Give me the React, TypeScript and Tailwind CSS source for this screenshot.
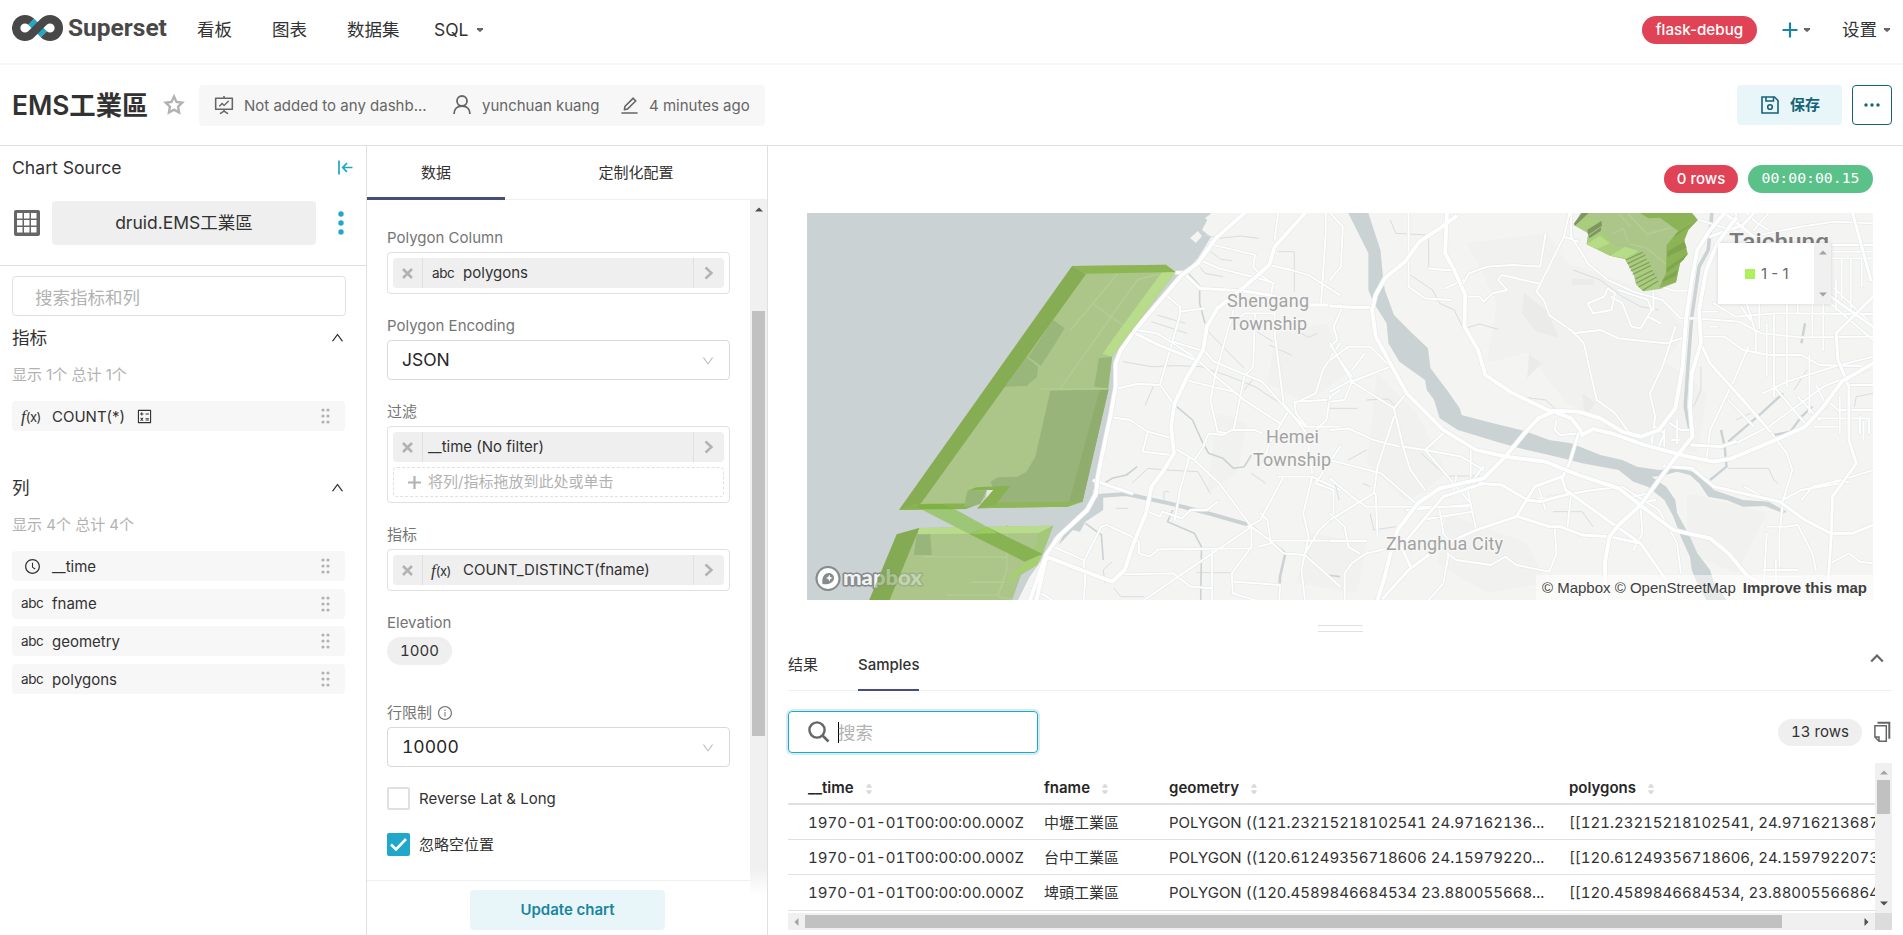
import type { ReactNode } from "react";
import {
  AiOutlineCalculator,
  AiOutlineClockCircle,
  AiOutlineDown,
  AiOutlineEdit,
  AiOutlineFundProjectionScreen,
  AiOutlineInfoCircle,
  AiOutlineUp,
} from "react-icons/ai";

/* ---------- small shared pieces ---------- */

function Caret() {
  return (
    <svg width="8" height="6" viewBox="0 0 8 6" className="shrink-0">
      <path d="M1 1h6v1.2L4.6 4.8H3.4L1 2.2z" fill="#666" />
    </svg>
  );
}

function Fx() {
  return (
    <span className="inline-flex items-baseline text-[#323232]">
      <span className="font-['Liberation_Serif',serif] text-[17px] leading-none italic">f</span>
      <span className="text-[13px] leading-none tracking-[-0.5px]">(x)</span>
    </span>
  );
}

function Grip() {
  return (
    <svg width="10" height="16" viewBox="0 0 10 16" fill="#b2b2b2">
      {[2, 8, 14].map((y) => (
        <g key={y}>
          <circle cx="2" cy={y} r="1.6" />
          <circle cx="7" cy={y} r="1.6" />
        </g>
      ))}
    </svg>
  );
}

function Chevron() {
  return (
    <svg width="10" height="14" viewBox="0 0 10 14" fill="none">
      <path d="M1.5 1.5L7.5 7l-6 5.5" stroke="#b2b2b2" strokeWidth="2.4" />
    </svg>
  );
}

function Arrow({ dir, color }: { dir: "up" | "down" | "left" | "right"; color: string }) {
  const d = {
    up: "M0 4.5L4 0.5L8 4.5z",
    down: "M0 0.5L4 4.5L8 0.5z",
    left: "M4.5 0L0.5 4L4.5 8z",
    right: "M0.5 0L4.5 4L0.5 8z",
  }[dir];
  const vertical = dir === "up" || dir === "down";
  return (
    <svg width={vertical ? 8 : 5} height={vertical ? 5 : 8} className="shrink-0">
      <path d={d} fill={color} />
    </svg>
  );
}

/* ---------- top navigation ---------- */

function Logo() {
  return (
    <div className="flex h-[64px] w-[185px] items-center pl-[12px]">
      <svg width="52" height="28" viewBox="0 0 52 28" fill="none" className="mt-[-8px]">
        <path d="M19.2 7.8L31.8 20.2" stroke="#20a7c9" strokeWidth="8.6" />
        <path
          d="M19.2 7.8A8.8 8.8 0 1 0 19.2 20.2L31.8 7.8A8.8 8.8 0 1 1 31.8 20.2"
          stroke="#484848"
          strokeWidth="8.4"
        />
      </svg>
      <span className="mt-[-7px] ml-[4px] font-['Roboto',sans-serif] text-[24.5px] font-bold tracking-[0px] text-[#484848]">
        Superset
      </span>
    </div>
  );
}

function NavBar() {
  return (
    <nav className="flex h-[65px] shrink-0 border-b-2 border-[#f7f7f7] text-[17.5px] text-[#323232]">
      <Logo />
      <div className="flex h-[60px] flex-1 items-center">
        <span className="w-[75px] pl-[12px]">看板</span>
        <span className="w-[75px] pl-[12px]">图表</span>
        <span className="w-[87px] pl-[12px]">数据集</span>
        <span className="flex items-center gap-[7px] pl-[12px]">
          SQL <Caret />
        </span>
        <span className="mr-[25px] ml-auto flex h-[28px] w-[115px] items-center justify-center rounded-full bg-[#e04355] text-[15.2px] font-medium text-white">
          flask-debug
        </span>
        <svg width="16" height="16" viewBox="0 0 16 16" className="mr-[5px]">
          <path d="M8 0.5v15M0.5 8h15" stroke="#1a85a0" strokeWidth="2.2" />
        </svg>
        <Caret />
        <span className="mr-[6px] ml-[31px]">设置</span>
        <Caret />
        <span className="w-[12px]" />
      </div>
    </nav>
  );
}

/* ---------- chart header ---------- */

function Header() {
  return (
    <header className="flex h-[81px] shrink-0 items-center border-b border-[#e0e0e0] pl-[12px]">
      <h1 className="w-[151px] pt-[1px] text-[26.4px] font-semibold tracking-[-0.05px] whitespace-nowrap text-[#323232]">
        EMS工業區
      </h1>
      <svg width="22" height="22" viewBox="0 0 22 22" fill="none">
        <path
          d="M11 2.6l2.5 5.3 5.8.8-4.2 4 1 5.8-5.1-2.8-5.1 2.8 1-5.8-4.2-4 5.8-.8z"
          stroke="#b2b2b2"
          strokeWidth="2.4"
        />
      </svg>
      <div className="ml-[14px] flex h-[41px] w-[566px] items-center rounded-[4px] bg-[#f7f7f7] pl-[14px] text-[15px] whitespace-nowrap text-[#666]">
        <AiOutlineFundProjectionScreen size={22} className="shrink-0" />
        <span className="ml-[9px] w-[209px] pt-[2px]">Not added to any dashb...</span>
        <svg width="18" height="20" viewBox="0 0 18 20" fill="none" className="shrink-0">
          <circle cx="9" cy="6" r="5" stroke="#666" strokeWidth="1.8" />
          <path d="M1 19c0-5 3.4-8 8-8s8 3 8 8" stroke="#666" strokeWidth="1.8" />
        </svg>
        <span className="ml-[11px] w-[137px] pt-[2px]">yunchuan kuang</span>
        <AiOutlineEdit size={21} className="shrink-0" />
        <span className="ml-[9px] pt-[2px]">4 minutes ago</span>
      </div>
      <button className="ml-auto flex h-[40px] w-[105px] items-center rounded-[4px] bg-[#e9f6f9] pl-[24px] text-[15px] font-bold text-[#156378]">
        <svg width="18" height="18" viewBox="0 0 18 18" fill="none" stroke="#156378" strokeWidth="1.6">
          <path d="M1 1h12.500L17 4.500V17H1z" />
          <path d="M5 1v4h7.500V1" />
          <circle cx="9" cy="11" r="2.3" />
        </svg>
        <span className="ml-[11px]">保存</span>
      </button>
      <button className="mr-[11px] ml-[10px] flex h-[40px] w-[40px] items-center justify-center rounded-[4px] border border-[#156378]">
        <svg width="16" height="4" viewBox="0 0 16 4" fill="#156378">
          <circle cx="2" cy="2" r="1.7" />
          <circle cx="8" cy="2" r="1.7" />
          <circle cx="14" cy="2" r="1.7" />
        </svg>
      </button>
    </header>
  );
}

/* ---------- data source panel ---------- */

function SourceRow({ icon, name, extra }: { icon: ReactNode; name: string; extra?: ReactNode }) {
  return (
    <div className="flex h-[30px] w-[333px] shrink-0 items-center rounded-[4px] bg-[#f7f7f7] text-[15px] text-[#323232]">
      <span className="flex w-[40px] items-center pl-[9px]">{icon}</span>
      <span className="pt-[2px]">{name}</span>
      {extra}
      <span className="mr-[14px] ml-auto">
        <Grip />
      </span>
    </div>
  );
}

function SectionTitle({ children }: { children: ReactNode }) {
  return (
    <div className="flex h-[36px] items-center justify-between pr-[21px] text-[17.6px] text-[#323232]">
      {children}
      <AiOutlineUp size={15} className="mt-[-1px]" />
    </div>
  );
}

const Abc = () => <span className="text-[13.5px] tracking-[-0.4px]">abc</span>;

function SourcePanel() {
  return (
    <aside className="flex w-[367px] shrink-0 flex-col border-r border-[#e0e0e0]">
      <div className="flex h-[120px] shrink-0 flex-col border-b border-[#e0e0e0]">
        <div className="flex h-[44px] items-center justify-between pr-[13px] pl-[12px] text-[17.6px] text-[#323232]">
          Chart Source
          <svg width="15" height="15" viewBox="0 0 15 15" fill="none" stroke="#20a7c9" strokeWidth="1.7" className="mt-[-2px]">
            <path d="M1 0.500v14M14.500 7.500H5M9 3.200L4.700 7.500L9 11.800" />
          </svg>
        </div>
        <div className="mt-[11px] flex h-[44px] items-center">
          <svg width="26" height="26" viewBox="0 0 26 26" className="ml-[14px]">
            <rect width="26" height="26" rx="2" fill="#666" />
            {[3, 10, 17].map((y) => [3, 10, 17].map((x) => <rect key={`${x}-${y}`} x={x} y={y} width="5.500" height="5.500" fill="#fff" />))}
          </svg>
          <span className="ml-[12px] flex h-[44px] w-[264px] items-center justify-center rounded-[4px] bg-[#efefef] text-[17.5px] text-[#323232]">
            druid.EMS工業區
          </span>
          <svg width="6" height="24" viewBox="0 0 6 24" fill="#20a7c9" className="ml-[22px]">
            <circle cx="3" cy="3" r="2.7" />
            <circle cx="3" cy="12" r="2.7" />
            <circle cx="3" cy="21" r="2.7" />
          </svg>
        </div>
      </div>
      <div className="flex flex-col pl-[12px]">
        <div className="mt-[10px] flex h-[40px] w-[334px] items-center rounded-[4px] border border-[#e0e0e0] pt-[4px] pl-[22px] text-[17.5px] text-[#b2b2b2]">
          搜索指标和列
        </div>
        <div className="mt-[4px]">
          <SectionTitle>指标</SectionTitle>
        </div>
        <div className="flex h-[45px] items-center pb-[7px] text-[15px] text-[#b2b2b2]">显示 1个 总计 1个</div>
        <SourceRow icon={<Fx />} name="COUNT(*)" extra={<AiOutlineCalculator size={17} className="ml-[11px]" />} />
        <div className="mt-[39px]">
          <SectionTitle>列</SectionTitle>
        </div>
        <div className="flex h-[45px] items-center pb-[7px] text-[15px] text-[#b2b2b2]">显示 4个 总计 4个</div>
        <div className="flex flex-col gap-[7.600px]">
          <SourceRow icon={<AiOutlineClockCircle size={17} className="ml-[3px]" />} name="__time" />
          <SourceRow icon={<Abc />} name="fname" />
          <SourceRow icon={<Abc />} name="geometry" />
          <SourceRow icon={<Abc />} name="polygons" />
        </div>
      </div>
    </aside>
  );
}

/* ---------- control panel ---------- */

function Label({ children }: { children: ReactNode }) {
  return <div className="flex h-[28px] shrink-0 items-center gap-[5px] text-[15px] text-[#757575]">{children}</div>;
}

function Pill({ children }: { children: ReactNode }) {
  return (
    <div className="flex h-[30px] items-stretch overflow-hidden rounded-[4px] bg-[#efefef] text-[15px] text-[#323232]">
      <span className="flex w-[30px] items-center justify-center border-r border-[#e0e0e0]">
        <svg width="11" height="11" viewBox="0 0 11 11">
          <path d="M1 1l9 9M10 1l-9 9" stroke="#b2b2b2" strokeWidth="2.500" />
        </svg>
      </span>
      <span className="flex flex-1 items-center">{children}</span>
      <span className="flex w-[31px] items-center justify-center border-l border-[#e0e0e0]">
        <Chevron />
      </span>
    </div>
  );
}

function Box({ children }: { children: ReactNode }) {
  return <div className="flex shrink-0 flex-col gap-[5px] rounded-[4px] border border-[#e0e0e0] p-[5px]">{children}</div>;
}

function Select({ value }: { value: string }) {
  return (
    <div className="flex h-[40px] shrink-0 items-center justify-between rounded-[4px] border border-[#d9d9d9] pr-[14px] pl-[14px] text-[17.5px] text-[#262626] tabular-nums">
      {value}
      <AiOutlineDown size={14} className="mt-[2px] text-[#bfbfbf]" />
    </div>
  );
}

function Check({ on, children }: { on?: boolean; children: ReactNode }) {
  return (
    <div className="flex h-[23px] shrink-0 items-center gap-[9px] text-[15px] text-[#323232]">
      {on ? (
        <svg width="23" height="23" viewBox="0 0 23 23" fill="none">
          <rect width="23" height="23" rx="2" fill="#20a7c9" />
          <path d="M4 11.500l5 5L19 6" stroke="#fff" strokeWidth="2.600" />
        </svg>
      ) : (
        <span className="h-[23px] w-[23px] rounded-[2px] border-2 border-[#e0e0e0]" />
      )}
      <span className="pt-[1px]">{children}</span>
    </div>
  );
}

function ControlPanel() {
  return (
    <section className="flex w-[401px] shrink-0 flex-col border-r border-[#e0e0e0]">
      <div className="flex h-[54px] shrink-0 border-b border-[#efefef] text-[15px] text-[#323232]">
        <span className="-mb-px flex w-[138px] items-center justify-center border-b-[3px] border-[#454e7c] pt-[3px]">数据</span>
        <span className="flex w-[262px] items-center justify-center pt-[1px]">定制化配置</span>
      </div>
      <div className="flex min-h-0 flex-1">
        <div className="flex w-[383px] flex-col">
          <div className="flex h-[680px] shrink-0 flex-col overflow-hidden pr-[20px] pl-[20px]">
            <div className="h-[24px] shrink-0" />
            <Label>Polygon Column</Label>
            <Box>
              <Pill>
                <span className="flex w-[40px] pl-[9px]">
                  <Abc />
                </span>
                polygons
              </Pill>
            </Box>
            <div className="h-[18px] shrink-0" />
            <Label>Polygon Encoding</Label>
            <Select value="JSON" />
            <div className="h-[18px] shrink-0" />
            <Label>过滤</Label>
            <Box>
              <Pill>
                <span className="pl-[5px]">__time (No filter)</span>
              </Pill>
              <div className="flex h-[30px] items-center rounded-[4px] border border-dashed border-[#e0e0e0] pl-[14px] text-[15px] text-[#b2b2b2]">
                <svg width="13" height="13" viewBox="0 0 13 13" className="mr-[7px]">
                  <path d="M6.500 0v13M0 6.500h13" stroke="#b2b2b2" strokeWidth="2.200" />
                </svg>
                将列/指标拖放到此处或单击
              </div>
            </Box>
            <div className="h-[18px] shrink-0" />
            <Label>指标</Label>
            <Box>
              <Pill>
                <span className="flex w-[40px] pl-[8px]">
                  <Fx />
                </span>
                COUNT_DISTINCT(fname)
              </Pill>
            </Box>
            <div className="h-[18px] shrink-0" />
            <Label>Elevation</Label>
            <div className="flex h-[28px] w-[65px] shrink-0 items-center justify-center rounded-full bg-[#efefef] pt-[1px] text-[15px] text-[#323232] tabular-nums">
              1000
            </div>
            <div className="h-[34px] shrink-0" />
            <Label>
              行限制 <AiOutlineInfoCircle size={16} />
            </Label>
            <Select value="10000" />
            <div className="h-[20px] shrink-0" />
            <Check>Reverse Lat &amp; Long</Check>
            <div className="h-[23px] shrink-0" />
            <Check on>忽略空位置</Check>
          </div>
          <div className="flex flex-1 border-t border-[#f0f0f0] pt-[9px] pl-[103px]">
            <button className="h-[40px] w-[195px] rounded-[4px] bg-[#e9f6f9] text-[15px] font-semibold text-[#1a85a0]">
              Update chart
            </button>
          </div>
        </div>
        <div className="flex w-[17px] flex-col items-center bg-linear-to-b from-[#f0f0f0] from-[668px] to-white to-[695px] pt-[7px]">
          <Arrow dir="up" color="#505050" />
          <div className="mt-[99px] h-[425px] w-[13px] bg-[#c1c1c1]" />
        </div>
      </div>
    </section>
  );
}

/* ---------- map ---------- */

function Roads({ d, w }: { d: string; w: number }) {
  return (
    <g fill="none" strokeLinejoin="round" strokeLinecap="round">
      <path d={d} stroke="#e8ebeb" strokeWidth={w + 1.5} vectorEffect="non-scaling-stroke" />
      <path d={d} stroke="#ffffff" strokeWidth={w} vectorEffect="non-scaling-stroke" />
    </g>
  );
}

function Streams({ d, w, color = "#cad2d3" }: { d: string; w: number; color?: string }) {
  return <path d={d} fill="none" stroke={color} strokeWidth={w} strokeLinejoin="round" vectorEffect="non-scaling-stroke" />;
}

const WEST_MINOR =
  "M1215 135L1330 165L1325 200L1345 225L1380 250L1375 285M1175 180L1230 205L1340 235L1385 250M1395 39L1385 120M1528 39V100L1515 310M1370 195L1430 210L1480 225L1568 285M1330 285L1385 330L1385 400L1410 610L1475 700L1490 820M1085 290L1120 320V345L1065 550M1120 335L1190 325M1000 390L1055 400L1100 430L1165 475L1210 520L1300 600L1400 670M1100 425L1190 455L1215 485L1350 545L1420 630L1470 680H1568M1270 330L1220 520L1205 600L1225 695L1250 700M1330 340L1325 500L1300 530L1270 690M1568 430L1520 510L1500 580L1440 610M1135 540L1270 575M945 565L1000 552L1065 555L1100 610M930 652L980 660L1030 695L1100 715M1030 695L1015 755L1095 765M1105 745L1160 780L1230 850L1320 980L1370 1020L1410 1060L1470 1065L1568 1160M1160 780L1185 740L1200 700L1240 705L1265 690H1330L1350 700M1145 775L1120 870L1105 960M1410 830L1345 960L1310 980M1395 830H1490L1568 870M1320 980L1170 1090L1020 1200M1490 830L1465 940L1480 1010L1460 1110L1470 1200M1370 1022H1568M1055 1048L1320 1045M1210 1048V1200M1030 935L1065 950L1070 935L1125 955L1150 930H1195L1225 905M985 1010L1005 1025V1060L1035 1070L1060 1048M765 1040L850 1080L855 1140L850 1200M850 1085L900 980L915 975L985 1010M960 1123L1100 1120L1150 1160L1210 1165M1320 1045V985M1320 1040L1265 1120L1268 1180L1330 1200M1270 1145L1400 1155L1398 1200M1568 570L1540 590L1530 660L1490 700M1420 640L1370 730L1350 800M1568 740L1500 850L1550 870V950L1510 990L1470 1060M700 1170L740 1185L760 1200M1345 940L1365 960L1375 1030L1340 1040M1530 600L1440 605L1445 640L1475 680M1270 370L1300 340H1385";
const WEST_MAJOR =
  "M1300 39L1220 115L1170 190L1125 225L990 395L955 450L940 490V560L925 650L905 750L890 830L885 880L860 930L780 1010L745 1065L700 1200M1470 39L1385 140L1370 195L1290 270L1225 325L1195 380L1185 450L1140 530L1105 610L1095 680L1103 760L1075 810L1040 860L1025 940L990 1030L965 1110L930 1145L750 1072M745 1075L718 1200";
const WEST_MID =
  "M1108 218H1130L1175 265L1290 272L1370 285L1480 315H1568M985 395L1060 435L1165 480M880 842L985 880";

const EAST_MAJOR =
  "M345 50L300 85L245 125L205 185L150 235L125 285L115 330L125 410L165 490L210 580L310 690L400 750L480 770L590 785L680 825L790 865L860 925L940 990L1040 1015L1090 1060L1140 1125L1190 1160M320 39L315 160L340 210L370 285L368 380L405 450L425 525L500 580L600 632L680 635L740 655L800 695L850 710L900 690L945 625L965 500L975 350L990 240L1005 150L1040 90L1080 39M1110 55L1060 130L1030 210L1010 330L1015 430L990 520L985 620L992 710L940 780L850 915L790 975L765 1010L752 1090L755 1200M130 1200L150 1130L165 1060L185 990L240 910L300 865L420 835L480 770L540 690L570 655L610 635M620 638L660 655L685 690L690 705L720 687L770 700L860 735L980 770L1050 785L1100 775L1230 715L1300 680L1350 620L1400 545L1486 490";
const EAST_MID =
  "M0 318L60 322H110M680 700L655 790L635 835L645 870L740 945L850 1030L920 1140M145 1195L215 1110L300 1040L400 990L510 950L560 860L635 830M410 850L470 855L540 900L575 905L660 880M515 950L600 980L630 980L690 1005L765 1010M915 798L990 805L1050 860L1130 880L1230 905L1300 960L1370 1000L1430 1000L1486 975M1015 430L1040 490L1130 600L1205 695M1360 1200L1372 1000L1375 890L1440 790L1420 720V560L1390 480L1385 400L1486 290M220 1100L195 1040L240 980L310 890L420 850M990 735L1070 740L1110 725M765 1010L850 1030M1080 39L1300 235L1486 380M1430 39L1480 240M1040 110L1130 75L1160 39";
const EAST_MINOR =
  "M215 39V260L260 295L330 300M0 39L35 80L30 200L0 240M35 318L10 380L20 420L0 440M590 100L575 200L500 195L430 200L380 220L365 250M365 240L315 265M270 205L315 210L340 210M370 290L410 290L420 305L445 280L485 270L460 240L470 225L570 250M655 39L640 110L565 275L585 300L600 345L665 395L695 430L715 530L730 600L780 640L820 700M665 400L740 390L790 415L920 430L975 410M660 39V110L695 170L705 190L760 240L830 275L910 300L960 355H1010M640 110L680 125M945 380L910 500L875 580L890 650L880 730M705 310L750 290L760 265L780 280L770 330L720 340ZM770 290L800 310L825 380L850 385L880 330L870 300L790 270M870 350L905 370M885 270V330M905 260L940 272H985M1205 695L1250 760L1265 810L1240 900L1230 1000V1100M1010 60L1130 100M1070 39L1140 100M1110 39L1125 90M1200 39L1160 90M1140 39L1170 70L1200 90M1150 110L1290 80L1380 65L1486 70M1375 135H1486M1375 155H1486M1375 175H1486M1000 355L1120 365L1180 400L1290 412L1486 410M1050 310L1110 350L1220 340L1486 342M1020 335H1060M1040 380H1060M1020 410H1080L1130 450L1200 465L1290 465L1340 495L1486 500M1125 320L1150 360M1140 310L1165 400V455M1175 310V385M1195 370V525M1215 340V590M1250 310V560M1280 310V340M1312 465V640M1320 310V410M1350 310V450M1455 180V260M1425 180V340M1385 240V330M1400 180V300M1380 265L1486 375M1370 310L1486 420M1395 630H1486M1340 655H1440M1325 680H1390M1395 590V700M1370 610L1395 635M1185 580L1250 545L1380 500L1486 470M1030 780L1040 690L1110 530L1145 440M1110 730L1200 680L1350 560L1486 500M1090 600L1160 680M1215 560L1300 670M1280 590L1340 660M1420 555H1486M1440 655H1475V700M1450 650V700M1460 665V720M1330 555L1360 620M950 660V730M935 720H955M930 670L960 690H985M915 690V740M890 680L915 700L900 740M0 480L50 440L110 440L165 500L60 545L40 600L0 605M0 430L60 545L175 625L200 740L260 750L385 910M60 540L0 575M20 470L60 530M95 460L60 510M175 625L205 585M175 650L130 800L120 880L0 960M0 780L140 820L245 920M260 750L320 690M260 750L360 770L420 810M0 835L60 890L100 920L380 920M210 930L380 915M250 960L390 935M375 860L400 990M300 930L310 1000L330 1030M320 1060L345 1080L440 1095L480 1070L510 1095L600 1115L620 1060L615 980M40 1200V1120L60 1090L100 1060L180 1040M0 1023H100M0 940L40 980L50 1040L80 1060M125 880L130 1010M560 900L720 870L800 860L900 930L950 1030L960 1120M660 880L650 980M570 860L590 930M620 660L615 690L630 705L680 700M850 925L855 1000L830 1050M790 865L830 890L870 880M840 910L890 900M1135 860L1210 905M1230 905L1290 870L1420 845M1290 900L1320 860L1400 840L1486 810M1195 980H1250L1280 975L1320 1060L1330 1110M1195 1000L1185 1200M1185 1110H1280M1200 1130H1290M1220 1080V1160M1370 1090L1420 1060L1450 1085L1486 1090M325 1060L310 1150L270 1200M345 830L340 870M260 870L220 810L200 740M385 750V830M0 690L50 685L120 720L190 740M420 800L385 850";

function Wordmark() {
  return (
    <>
      <circle cx="21" cy="365.5" r="11.5" fill="#fff" stroke="#868b8c" strokeWidth="2" />
      <path
        d="M15.500 371c-.7-5 .4-8.800 3.800-10.500 4-1.800 8.200 1 7.700 5.200-.6 4.200-6.300 6.200-11.500 5.300z"
        fill="#868b8c"
      />
      <path d="M22.300 361.500l1 2.500 2.500 1-2.500 1-1 2.500-1-2.500-2.500-1 2.500-1z" fill="#fff" />
      <text
        x="36"
        y="371.5"
        textLength="79"
        lengthAdjust="spacingAndGlyphs"
        fontFamily="Lato, sans-serif"
        fontWeight="900"
        fontSize="20"
        fill="#f2f4f4"
        stroke="#868b8c"
        strokeWidth="3"
        strokeLinejoin="round"
        paintOrder="stroke"
      >
        mapbox
      </text>
    </>
  );
}

function MapCanvas() {
  return (
    <svg width="1066" height="387" viewBox="0 0 1066 387" className="block">
      <rect width="1066" height="387" fill="#cad2d3" />
      <path
        d="M404 0L395 17L404 24L391 45L375 62L324 119L311 143L307 175L301 205L289 265L285 285L275 300L247 325L236 345L222 365L211 387H1066V0z"
        fill="#f4f4f3"
      />
      <path d="M383 25L391 18L395 23L389 30zM398 5L405 0L410 2L403 10z" fill="#f4f4f3" />
      <g fill="#f1f1f0">
        <path d="M660 30L740 20L760 50L850 80L880 120L840 170L800 210L760 190L720 140L680 150L690 90z" />
        <path d="M470 120L520 110L540 160L500 190L460 170zM570 160L610 200L640 260L600 290L560 250z" />
        <path d="M860 150L900 180L890 240L830 230L790 220zM410 200L440 210L430 260L400 280zM880 280L960 300L930 360L880 340z" />
        <path d="M640 300L720 330L740 370L680 380L630 350zM500 320L560 330L550 380L490 370z" />
      </g>
      <g fill="#ebebea">
        <path d="M717 80L740 98L752 125L728 118L715 100zM722 142L735 150L720 165zM775 180L788 190L778 205zM765 66h22v6h-22z" />
      </g>

      {/* western half: coast and townships */}
      <g transform="translate(-27 -13) scale(0.357143 0.333333)">
        <path d="M870 900L905 885V930L855 965L840 995L820 990L780 1035L800 990z" fill="#cad2d3" />
        <Streams
          w={1}
          color="#d8dddd"
          d="M1190 105L1230 115L1290 108L1340 115M1205 155L1235 178L1265 182M1175 200L1190 220L1240 230M1395 155H1440V275M1055 345L1135 370M1040 365L1140 400M960 485L1040 500L1110 497L1180 500L1260 530L1330 560L1400 610M1190 385L1240 440L1300 505M1335 395L1380 425M1370 435L1435 467M1330 530L1300 570M1045 560L1022 617M1450 395L1480 412L1505 400M985 850L1030 805L1080 810L1170 815L1205 880M1320 820L1360 850M1075 905V875H1090M910 1150L905 1110L930 1085M935 1165L955 1190H1020M1165 1118H1268M940 925H975"
        />
        <Streams
          w={1.6}
          d="M1145 222L1175 258V310L1190 370M1100 610L1155 660L1180 720L1200 760L1240 775L1270 805L1300 800L1320 765M900 855L930 835L970 825L1000 800M1100 930L1085 965L1160 1000L1180 1040L1178 1200M855 970L900 1005L905 1080M1475 1065L1530 1125L1568 1130"
        />
        <Streams w={4} d="M890 888L970 882L1090 910L1200 940L1320 977" />
        <Streams w={2.6} d="M1320 977L1380 1030L1415 1060L1400 1130L1398 1190" />
        <Roads w={1.8} d={WEST_MINOR} />
        <Roads w={2.8} d={WEST_MID} />
        <Roads w={3.8} d={WEST_MAJOR} />
      </g>

      {/* eastern half: river, Zhanghua and Taichung */}
      <g transform="translate(523 -13) scale(0.365430 0.333333)">
        <path
          d="M50 39H105L120 90L138 150L145 230L150 270L175 345L225 400L268 445L275 505L320 570L355 625L360 645L430 665L530 692L600 720L660 730L740 765L800 780L840 800L900 810L960 805L1000 818L1030 840L1050 870L1130 900L1200 905L1250 935L1240 940L1190 918L1130 920L1085 900L1035 890L1010 850L985 825L950 815L905 828L880 830L920 860L945 900L950 940L985 1010L1005 1060L1040 1110L1050 1145L1085 1200H1030L1005 1150L990 1110L985 1070L960 1010L940 950L915 900L870 860L830 845L790 810L690 790L620 770L520 745L470 730L350 690L300 655L285 600L265 570L260 540L190 485L160 430L155 370L120 310L105 270V160z"
          fill="#cad2d3"
        />
        <Streams
          w={1}
          color="#d8dddd"
          d="M165 60L180 100L270 105V200M220 225L280 270L300 310L340 330L365 385M370 385L410 372L460 388M490 565L520 590L590 600L620 630M665 210L740 240L800 290L850 320L900 330M100 600L160 597L185 625M250 760L290 800L320 828H410M0 625H75M50 780L100 750M90 850L110 860M15 855L25 900M610 935L690 935L720 980M1015 500V570L995 620M1090 805H1200L1215 840L1225 850M1305 510L1270 570M1486 580L1440 590L1435 620M1110 660L1150 640M110 940L120 990L180 980"
        />
        <Streams w={3.5} d="M1045 39L1035 150L1010 200L990 350L980 490L972 620L985 690" />
        <Streams w={2.4} d="M1070 690L1080 740L1085 800L1040 840M1090 725L1180 640L1240 580M1215 705L1260 695L1290 650L1320 620M1300 370L1290 430" />
        <Roads w={1.8} d={EAST_MINOR} />
        <Roads w={2.8} d={EAST_MID} />
        <Roads w={3.8} d={EAST_MAJOR} />
      </g>

      {/* place names */}
      <g
        fontFamily="Roboto, sans-serif"
        fontSize="18"
        fill="#a3a3a3"
        stroke="#f6f6f5"
        strokeWidth="3"
        strokeLinejoin="round"
        paintOrder="stroke"
      >
        <text x="420" y="94" textLength="82">Shengang</text>
        <text x="422" y="117" textLength="78">Township</text>
        <text x="459" y="230" textLength="53">Hemei</text>
        <text x="446" y="253" textLength="78">Township</text>
        <text x="579" y="337" textLength="117">Zhanghua City</text>
        <text x="922" y="37" textLength="100" lengthAdjust="spacingAndGlyphs" fontSize="24" fontWeight="500" fill="#7c7c7c">
          Taichung
        </text>
      </g>

      <Wordmark />

      {/* extruded industrial zones */}
      <g transform="translate(-27 -13) scale(0.357143 0.333333)">
        <path d="M818 198L1080 194L1108 216L930 470L920 565L847 905L805 920L553 925L598 870H578L575 890L560 912L520 927L333 930z" fill="#abc688" />
        <path d="M765 360L797 385L765 440L730 497L695 470zM690 472L722 500L720 530L690 558L630 560z" fill="#99b67b" />
        <path d="M757 572L920 568L847 905L805 920L553 925L598 870L590 845L610 832L665 830L690 815L715 770z" fill="#98b47a" />
        <path d="M895 570L920 568L847 905L808 912z" fill="#90ad6e" />
        <g fill="none" stroke="#b3cd94" strokeWidth="1.5">
          <path vectorEffect="non-scaling-stroke" d="M945 222L812 392M1060 222L1000 240L785 565M875 310L985 395M730 567H918" />
        </g>
        <path d="M818 198L857 222L395 910L333 930z" fill="#86ad54" />
        <path d="M818 198L1080 194L1108 216L857 221z" fill="#8cb653" />
        <path d="M1068 218L1108 216L930 470L903 462L930 420z" fill="#b9dc8c" />
        <path d="M893 475L930 470L918 565L880 560z" fill="#98b676" />
        <path d="M570 908L808 905L847 903L805 920L553 925z" fill="#8db75a" />
        <path d="M333 930L375 912L560 910L520 927z" fill="#88b34f" />
        <path d="M525 872L550 862L645 857L603 915L553 925L598 870z" fill="#88b251" />
        <path d="M525 872H578L560 912L515 922z" fill="#97b576" />
        <path d="M580 870H596L577 894z" fill="#e3e9e6" />
        <path d="M327 1003L390 984L765 977L735 1062L720 1095L675 1125L650 1200H250z" fill="#abc688" />
        <path d="M383 997H420L425 1065H375z" fill="#98b67b" />
        <g fill="none" stroke="#b3cd94" strokeWidth="1.5">
          <path vectorEffect="non-scaling-stroke" d="M400 1070L635 1072M635 975V1110L610 1190L650 1198M535 1147H630M465 1185H610" />
        </g>
        <path d="M327 1003L390 984L307 1200H250z" fill="#84aa54" />
        <path d="M390 984L765 977L725 999L385 1003z" fill="#b8dc8b" />
        <path d="M765 977L735 1062L708 1055L725 999z" fill="#a3c87b" />
        <path d="M735 1062L720 1095L675 1118L630 1150L650 1120L700 1080z" fill="#a6d070" />
        <path d="M395 928L490 928L582 982L530 1002z" fill="#9dc676" />
        <path d="M385 915L450 912L490 928H395z" fill="#7fb140" />
        <path d="M582 982L735 1062L685 1085L530 1002z" fill="#87b352" />
        <path d="M582 982L610 1000L535 1002z" fill="#98cc5c" />
      </g>
      <g opacity="0.35">
        <Wordmark />
      </g>
      <g transform="translate(753 -8) scale(0.333333)">
        <path d="M62 24H396L413 45L385 75L373 105L383 148L360 175L348 232L300 252L250 259L228 238L222 208L205 180L195 162L150 152L80 118L85 85L42 60z" fill="#abc688" />
        <g fill="none" stroke="#b3cd94" strokeWidth="1.5">
          <path vectorEffect="non-scaling-stroke" d="M205 28L262 88L330 68M155 88L190 70L205 110M210 118L262 130L318 178M175 24L212 66" />
        </g>
        <path d="M240 24H396L413 45L385 75L373 105L383 148L360 175L348 232L298 248L318 205L320 120L355 78L300 38L265 40z" fill="#8cb457" />
        <path d="M410 48L350 84L340 98L385 66zM372 110L322 140V155L380 128zM381 148L320 190V202L370 165zM352 195L310 222L305 232L348 212z" fill="#80a54e" />
        <path d="M42 60L62 42L85 36L125 52L122 78L165 122L235 135L262 155L298 248L250 259L228 238L222 208L205 180L195 162L150 152L80 118L85 85z" fill="#a9cd7c" />
        <path d="M80 118L120 92L150 115L110 132zM150 152L195 125L235 138L200 160z" fill="#b6dc86" />
        <path d="M42 55L66 24H86L45 62zM82 74L124 48L126 62L84 90zM86 92L124 66L122 78L88 100z" fill="#7f9663" />
        <g fill="none" stroke="#7d9460" strokeWidth="4" opacity="0.8">
          <path d="M198 165L248 142M203 176L256 150M208 188L260 162M212 198L268 172M218 208L272 182M226 222L278 196M230 234L284 206M236 246L290 216M248 256L294 228" />
        </g>
      </g>
    </svg>
  );
}

function ChartMap() {
  return (
    <div className="relative ml-[39px] h-[387px] w-[1066px] shrink-0 overflow-hidden">
      <MapCanvas />
      <div className="absolute top-[30px] left-[911px] flex h-[61px] w-[113px] bg-white shadow-[0_0_4px_rgba(0,0,0,0.12)]">
        <div className="flex w-[96px] items-center pl-[27px] text-[15px] text-[#666]">
          <span className="mr-[6px] h-[10px] w-[10px] bg-[#aef15c]" />
          <span className="pt-[1px] whitespace-nowrap">1 - 1</span>
        </div>
        <div className="flex w-[17px] flex-col items-center justify-between bg-[#f0f0f0] py-[7px]">
          <Arrow dir="up" color="#a3a3a3" />
          <Arrow dir="down" color="#a3a3a3" />
        </div>
      </div>
      <div className="absolute right-0 bottom-0 flex h-[25px] w-[337px] items-center justify-end bg-white/50 pt-[1px] pr-[6px] font-['Liberation_Sans',Arial,sans-serif] text-[15px] whitespace-nowrap text-[#404040]">
        © Mapbox © OpenStreetMap<b className="ml-[7px]">Improve this map</b>
      </div>
    </div>
  );
}

/* ---------- results table ---------- */

const ROWS = [
  ["1970-01-01T00:00:00.000Z", "中壢工業區", "POLYGON ((121.23215218102541 24.97162136...", "[[121.23215218102541, 24.9716213687"],
  ["1970-01-01T00:00:00.000Z", "台中工業區", "POLYGON ((120.61249356718606 24.15979220...", "[[120.61249356718606, 24.1597922073"],
  ["1970-01-01T00:00:00.000Z", "埤頭工業區", "POLYGON ((120.4589846684534 23.880055668...", "[[120.4589846684534, 23.88005566864"],
];

function SortIcon() {
  return (
    <svg width="8" height="12" viewBox="0 0 8 12" fill="#d9d9d9">
      <path d="M1 4.800L2.800 1.200h2.400L7 4.800zM1 7.200h6L5.200 10.800H2.800z" />
    </svg>
  );
}

function ResultsTable() {
  return (
    <div className="flex h-[167px] w-[1104px] shrink-0 flex-col">
      <div className="flex h-[150px]">
        <div className="w-[1087px] overflow-hidden text-[15px] text-[#323232]">
          <div className="grid h-[42px] grid-cols-[236px_125px_400px_1fr] items-center border-b-2 border-[#e0e0e0] pt-[11px] pl-[20px] font-semibold text-[#262626]">
            {["__time", "fname", "geometry", "polygons"].map((h) => (
              <span key={h} className="flex items-center gap-[11px]">
                {h} <SortIcon />
              </span>
            ))}
          </div>
          {ROWS.map((r) => (
            <div
              key={r[1]}
              className="grid h-[35.200px] grid-cols-[236px_125px_400px_1fr] items-center border-b border-[#e0e0e0] pt-[2px] pl-[20px] whitespace-nowrap tabular-nums"
            >
              {r.map((c) => (
                <span key={c}>{c}</span>
              ))}
            </div>
          ))}
        </div>
        <div className="flex w-[17px] shrink-0 flex-col items-center bg-[#f0f0f0] pt-[7px] pb-[7px]">
          <Arrow dir="up" color="#a3a3a3" />
          <div className="mt-[5px] h-[34px] w-[13px] bg-[#c1c1c1]" />
          <div className="flex-1" />
          <Arrow dir="down" color="#505050" />
        </div>
      </div>
      <div className="flex h-[17px]">
        <div className="flex w-[1087px] items-center bg-[#f0f0f0] px-[6px]">
          <Arrow dir="left" color="#a3a3a3" />
          <div className="ml-[6px] h-[13px] w-[977px] bg-[#c1c1c1]" />
          <div className="flex-1" />
          <Arrow dir="right" color="#505050" />
        </div>
        <div className="w-[17px] bg-[#dcdcdc]" />
      </div>
    </div>
  );
}

function ChartPanel() {
  return (
    <main className="flex min-w-0 flex-1 flex-col">
      <div className="flex h-[67px] shrink-0 justify-end gap-[10px] pt-[19px] pr-[30px] text-[15px] text-white">
        <span className="flex h-[28px] w-[74px] items-center justify-center rounded-full bg-[#e04355] font-medium">0 rows</span>
        <span className="flex h-[28px] w-[125px] items-center justify-center rounded-full bg-[#5ac189] pb-[1px] font-['DejaVu_Sans_Mono',monospace] text-[14.800px]">
          00:00:00.15
        </span>
      </div>
      <ChartMap />
      <div className="mt-[25px] ml-[550px] h-[7px] w-[45px] shrink-0 border-y border-[#e0e0e0]" />
      <div className="ml-[20px] flex w-[1104px] flex-col">
        <div className="mt-[7px] flex h-[52px] shrink-0 border-b border-[#f0f0f0] text-[15px] text-[#323232]">
          <span className="flex w-[70px] items-center pt-[1px]">结果</span>
          <span className="-mb-px flex items-center border-b-2 border-[#454e7c] pt-[2px] font-medium">Samples</span>
          <svg width="14" height="10" viewBox="0 0 14 10" fill="none" className="mt-[14px] mr-[8px] ml-auto">
            <path d="M1.200 8.500L7 2.500l5.800 6" stroke="#666" strokeWidth="2.200" />
          </svg>
        </div>
        <div className="mt-[20px] flex h-[42px] shrink-0 items-center">
          <div className="flex h-[42px] w-[250px] items-center rounded-[4px] border border-[#20a7c9] pl-[19px] text-[17.500px] text-[#b2b2b2] shadow-[0_0_0_2px_rgba(32,167,201,0.2)]">
            <svg width="22" height="22" viewBox="0 0 22 22" fill="none">
              <circle cx="9" cy="9" r="7.600" stroke="#666" strokeWidth="2.400" />
              <path d="M14.500 14.500L20.500 20.500" stroke="#666" strokeWidth="2.600" />
            </svg>
            <span className="ml-[8px] h-[21px] w-px bg-black" />
            <span className="-ml-px pt-[2px]">搜索</span>
          </div>
          <span className="ml-auto flex h-[27px] w-[84px] items-center justify-center rounded-full bg-[#efefef] pt-[1px] text-[15px] text-[#323232] tabular-nums">
            13 rows
          </span>
          <svg width="17" height="22" viewBox="0 0 17 22" fill="none" stroke="#666" strokeWidth="1.500" className="mr-[1px] ml-[12px]">
            <path d="M3.500 1.700h11.800v16" strokeWidth="2" />
            <path d="M0.900 4.700h11.400v15.500H5L0.900 16zM0.900 16H5v4.200" />
          </svg>
        </div>
        <div className="h-[10px]" />
        <ResultsTable />
      </div>
    </main>
  );
}

export default function App() {
  return (
    <div className="flex h-[935px] w-[1903px] flex-col overflow-hidden bg-white font-['Inter','Noto_Sans_CJK_SC',sans-serif]">
      <NavBar />
      <Header />
      <div className="flex min-h-0 flex-1">
        <SourcePanel />
        <ControlPanel />
        <ChartPanel />
      </div>
    </div>
  );
}
